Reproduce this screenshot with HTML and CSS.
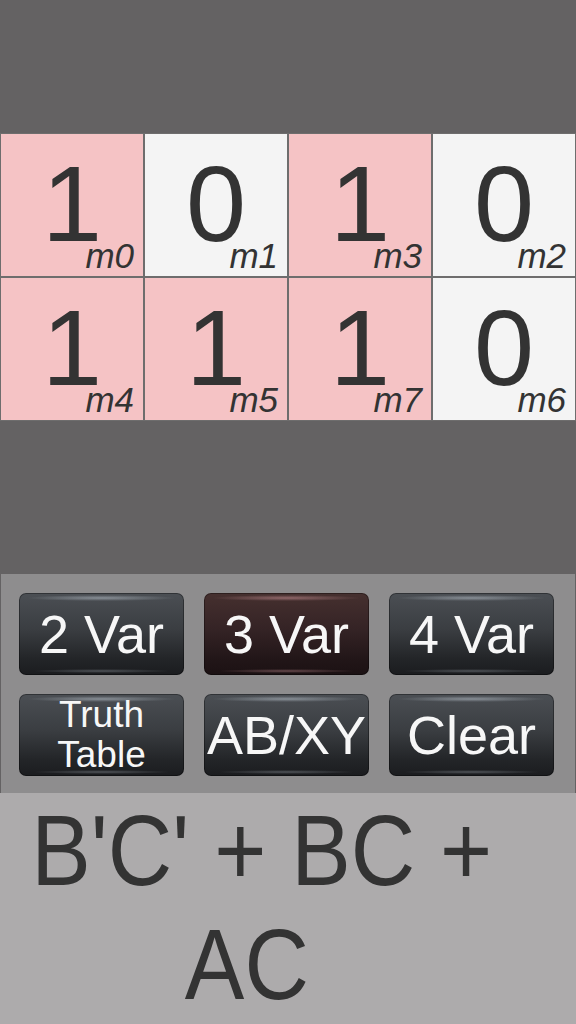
FILE: index.html
```html
<!DOCTYPE html>
<html>
<head>
<meta charset="utf-8">
<link rel="stylesheet" href="styles.css">
</head>
<body>
<div class="screen">
  <div class="top-space"></div>
  <div class="kmap">
    <div class="cell on"><span class="val">1</span><span class="sub">m0</span></div>
    <div class="cell"><span class="val">0</span><span class="sub">m1</span></div>
    <div class="cell on"><span class="val">1</span><span class="sub">m3</span></div>
    <div class="cell"><span class="val">0</span><span class="sub">m2</span></div>
    <div class="cell on"><span class="val">1</span><span class="sub">m4</span></div>
    <div class="cell on"><span class="val">1</span><span class="sub">m5</span></div>
    <div class="cell on"><span class="val">1</span><span class="sub">m7</span></div>
    <div class="cell"><span class="val">0</span><span class="sub">m6</span></div>
  </div>
  <div class="mid-space"></div>
  <div class="panel">
    <div class="btn">2 Var</div>
    <div class="btn active">3 Var</div>
    <div class="btn">4 Var</div>
    <div class="btn small">Truth<br>Table</div>
    <div class="btn">AB/XY</div>
    <div class="btn">Clear</div>
  </div>
  <div class="result">
    <span class="line l1">B'C' + BC +</span>
    <span class="line l2">AC</span>
  </div>
</div>
</body>
</html>
```

FILE: styles.css
```css
html, body {
  margin: 0;
  padding: 0;
}
body {
  background: #646263;
  font-family: "Liberation Sans", Arial, sans-serif;
}
.screen {
  width: 576px;
  height: 1024px;
  display: flex;
  flex-direction: column;
  overflow: hidden;
}
.top-space {
  height: 134px;
  flex: none;
}
.kmap {
  display: grid;
  grid-template-columns: repeat(4, 142px);
  grid-template-rows: repeat(2, 142px);
  gap: 2px;
  padding: 0 1px;
  flex: none;
}
.cell {
  display: grid;
  background: #f4f4f4;
  box-shadow: 0 0 0 1px #6e6d6d;
  color: #333333;
}
.cell.on {
  background: #f5c3c5;
}
.val {
  grid-area: 1 / 1;
  justify-self: center;
  align-self: start;
  font-size: 108px;
  line-height: 76px;
  padding-top: 32px;
}
.sub {
  grid-area: 1 / 1;
  justify-self: end;
  align-self: end;
  font-style: italic;
  font-size: 35px;
  line-height: 26px;
  padding: 0 9px 7px 0;
}
.mid-space {
  height: 154px;
  flex: none;
}
.panel {
  flex: none;
  height: 219px;
  box-sizing: border-box;
  background: #8e8d8e;
  margin: 0 1px;
  padding: 19px 0 0 18px;
  display: grid;
  grid-template-columns: repeat(3, 165px);
  grid-template-rows: repeat(2, 82px);
  column-gap: 20px;
  row-gap: 19px;
}
.btn {
  border-radius: 7px;
  display: flex;
  align-items: center;
  justify-content: center;
  text-align: center;
  color: #f7f7f7;
  font-size: 54px;
  background:
    radial-gradient(ellipse 45% 3px at 50% 5px, rgba(200, 210, 220, 0.5), rgba(200, 210, 220, 0) 100%),
    radial-gradient(ellipse 42% 2px at 50% calc(100% - 4px), rgba(200, 210, 220, 0.3), rgba(200, 210, 220, 0) 100%),
    linear-gradient(#4b4f54 0%, #3a3d41 45%, #232528 80%, #1b1c1f 100%);
  box-shadow: inset 0 0 0 1px rgba(0, 0, 0, 0.35);
}
.btn.active {
  background:
    radial-gradient(ellipse 45% 3px at 50% 5px, rgba(220, 160, 165, 0.5), rgba(220, 160, 165, 0) 100%),
    radial-gradient(ellipse 42% 2px at 50% calc(100% - 4px), rgba(220, 160, 165, 0.4), rgba(220, 160, 165, 0) 100%),
    linear-gradient(#46302f 0%, #342325 45%, #221618 80%, #1b1113 100%);
}
.btn.small {
  font-size: 37px;
  line-height: 40px;
}
.result {
  flex: 1;
  background: #adabac;
  color: #333333;
  font-size: 100px;
  line-height: 114px;
}
.line {
  display: block;
  white-space: nowrap;
  transform: scaleX(0.893);
  transform-origin: 0 0;
}
.l1 {
  padding-left: 35px;
}
.l2 {
  padding-left: 207px;
}
```
